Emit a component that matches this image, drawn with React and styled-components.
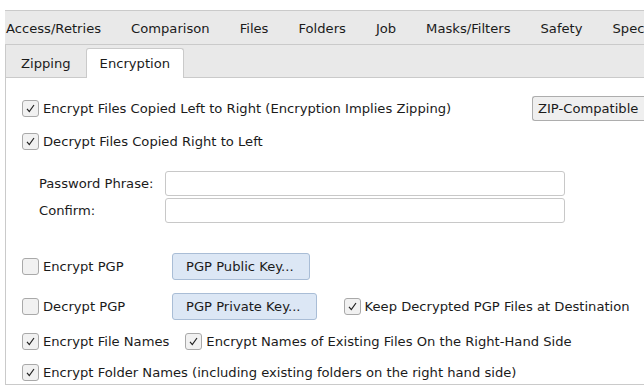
import React from "react";
import styled, { createGlobalStyle } from "styled-components";

const Global = createGlobalStyle`
  html, body { margin: 0; padding: 0; background: #fff; }
  body { font-family: "DejaVu Sans", Verdana, sans-serif; font-size: 13.13px; color: #1b1b1b; overflow: hidden; }
`;

const Page = styled.div`
  width: 644px;
  height: 390px;
  padding-top: 10px;
  box-sizing: border-box;
  overflow: hidden;
`;

const Frame = styled.div`
  margin-left: 5px;
  display: flex;
  flex-direction: column;
`;

const MainTabs = styled.div`
  height: 32px;
  padding-top: 1px;
  box-sizing: content-box;
  background: #e9e9e9;
  border-top: 1px solid #cacaca;
  border-bottom: 1px solid #cacaca;
  display: flex;
  align-items: center;
  overflow: hidden;
  white-space: nowrap;
`;

const MainTab = styled.div`
  padding-left: ${(p) => (p.$first ? "1px" : "15px")};
  padding-right: 15px;
  flex: none;
`;

const SubTabs = styled.div`
  height: 32px;
  background: #e9e9e9;
  border-left: 1px solid #cacaca;
  border-bottom: 1px solid #cacaca;
  display: flex;
  align-items: flex-end;
`;

const SubTab = styled.div`
  height: 30px;
  box-sizing: border-box;
  padding: 0 ${(p) => (p.$active ? "13px" : "14px")} 1px;
  display: flex;
  align-items: center;
  margin-bottom: -1px;
  background: ${(p) => (p.$active ? "#fff" : "transparent")};
  border: 1px solid ${(p) => (p.$active ? "#cacaca" : "transparent")};
  border-bottom: none;
  border-radius: 3px 3px 0 0;
`;

const Content = styled.div`
  height: 307px;
  background: #fff;
  border-left: 1px solid #cacaca;
  border-bottom: 1px solid #cacaca;
  padding: 18px 0 0 16px;
  box-sizing: border-box;
  display: flex;
  flex-direction: column;
`;

const Row = styled.div`
  display: flex;
  align-items: center;
  height: ${(p) => p.$h || 25}px;
  margin-top: ${(p) => p.$mt || 0}px;
  white-space: nowrap;
  flex: none;
`;

const CheckLabel = styled.label`
  display: flex;
  align-items: center;
  gap: 4px;
  width: ${(p) => (p.$w ? p.$w + "px" : "auto")};
  flex: none;
  margin-left: ${(p) => p.$ml || 0}px;
`;

const Box = styled.span`
  width: 17px;
  height: 17px;
  box-sizing: border-box;
  border: 1px solid #a9a9a9;
  border-radius: 3px;
  background: #f1f1f1;
  display: flex;
  align-items: center;
  justify-content: center;
  flex: none;
`;

const Check = ({ checked }) => (
  <Box>
    {checked && (
      <svg width="11" height="11" viewBox="0 0 11 11">
        <path d="M2 5.8 L4.3 8.6 L9 2" fill="none" stroke="#222" strokeWidth="1.2" />
      </svg>
    )}
  </Box>
);

const CheckBox = ({ checked, children, w, ml }) => (
  <CheckLabel $w={w} $ml={ml}>
    <Check checked={checked} />
    <span>{children}</span>
  </CheckLabel>
);

const Spacer = styled.div`
  flex: 1;
`;

const ZipButton = styled.div`
  height: 25px;
  box-sizing: border-box;
  border: 1px solid #adadad;
  border-radius: 3px 0 0 3px;
  border-right: none;
  background: #efefef;
  padding: 0 0 0 5px;
  display: flex;
  align-items: center;
  width: 112px;
  flex: none;
`;

const PassGrid = styled.div`
  display: grid;
  grid-template-columns: 126px 400px;
  row-gap: 2px;
  margin-top: 21px;
  margin-left: 17px;
  align-items: center;
  flex: none;
`;

const Input = styled.div`
  height: 25px;
  box-sizing: border-box;
  border: 1px solid #c8c8c8;
  border-radius: 3px;
  background: #fff;
`;

const PgpButton = styled.div`
  height: 27px;
  box-sizing: border-box;
  border: 1px solid #a9bdd6;
  border-radius: 3px;
  background: #dce7f5;
  padding: 0 15px 0 13px;
  display: flex;
  align-items: center;
  flex: none;
`;

export default function App() {
  return (
    <Page>
      <Global />
      <Frame>
        <MainTabs>
          <MainTab $first>Access/Retries</MainTab>
          <MainTab>Comparison</MainTab>
          <MainTab>Files</MainTab>
          <MainTab>Folders</MainTab>
          <MainTab>Job</MainTab>
          <MainTab>Masks/Filters</MainTab>
          <MainTab>Safety</MainTab>
          <MainTab>Special</MainTab>
        </MainTabs>
        <SubTabs>
          <SubTab>Zipping</SubTab>
          <SubTab $active>Encryption</SubTab>
        </SubTabs>
        <Content>
          <Row $h={25}>
            <CheckBox checked>Encrypt Files Copied Left to Right (Encryption Implies Zipping)</CheckBox>
            <Spacer />
            <ZipButton>ZIP-Compatible</ZipButton>
          </Row>
          <Row $h={17} $mt={12}>
            <CheckBox checked>Decrypt Files Copied Right to Left</CheckBox>
          </Row>
          <PassGrid>
            <span>Password Phrase:</span>
            <Input />
            <span>Confirm:</span>
            <Input />
          </PassGrid>
          <Row $h={27} $mt={30}>
            <CheckBox w={150}>Encrypt PGP</CheckBox>
            <PgpButton>PGP Public Key...</PgpButton>
          </Row>
          <Row $h={27} $mt={13}>
            <CheckBox w={150}>Decrypt PGP</CheckBox>
            <PgpButton>PGP Private Key...</PgpButton>
            <CheckBox checked ml={27}>Keep Decrypted PGP Files at Destination</CheckBox>
          </Row>
          <Row $h={17} $mt={13}>
            <CheckBox checked>Encrypt File Names</CheckBox>
            <CheckBox checked ml={16}>Encrypt Names of Existing Files On the Right-Hand Side</CheckBox>
          </Row>
          <Row $h={17} $mt={14}>
            <CheckBox checked>Encrypt Folder Names (including existing folders on the right hand side)</CheckBox>
          </Row>
        </Content>
      </Frame>
    </Page>
  );
}
